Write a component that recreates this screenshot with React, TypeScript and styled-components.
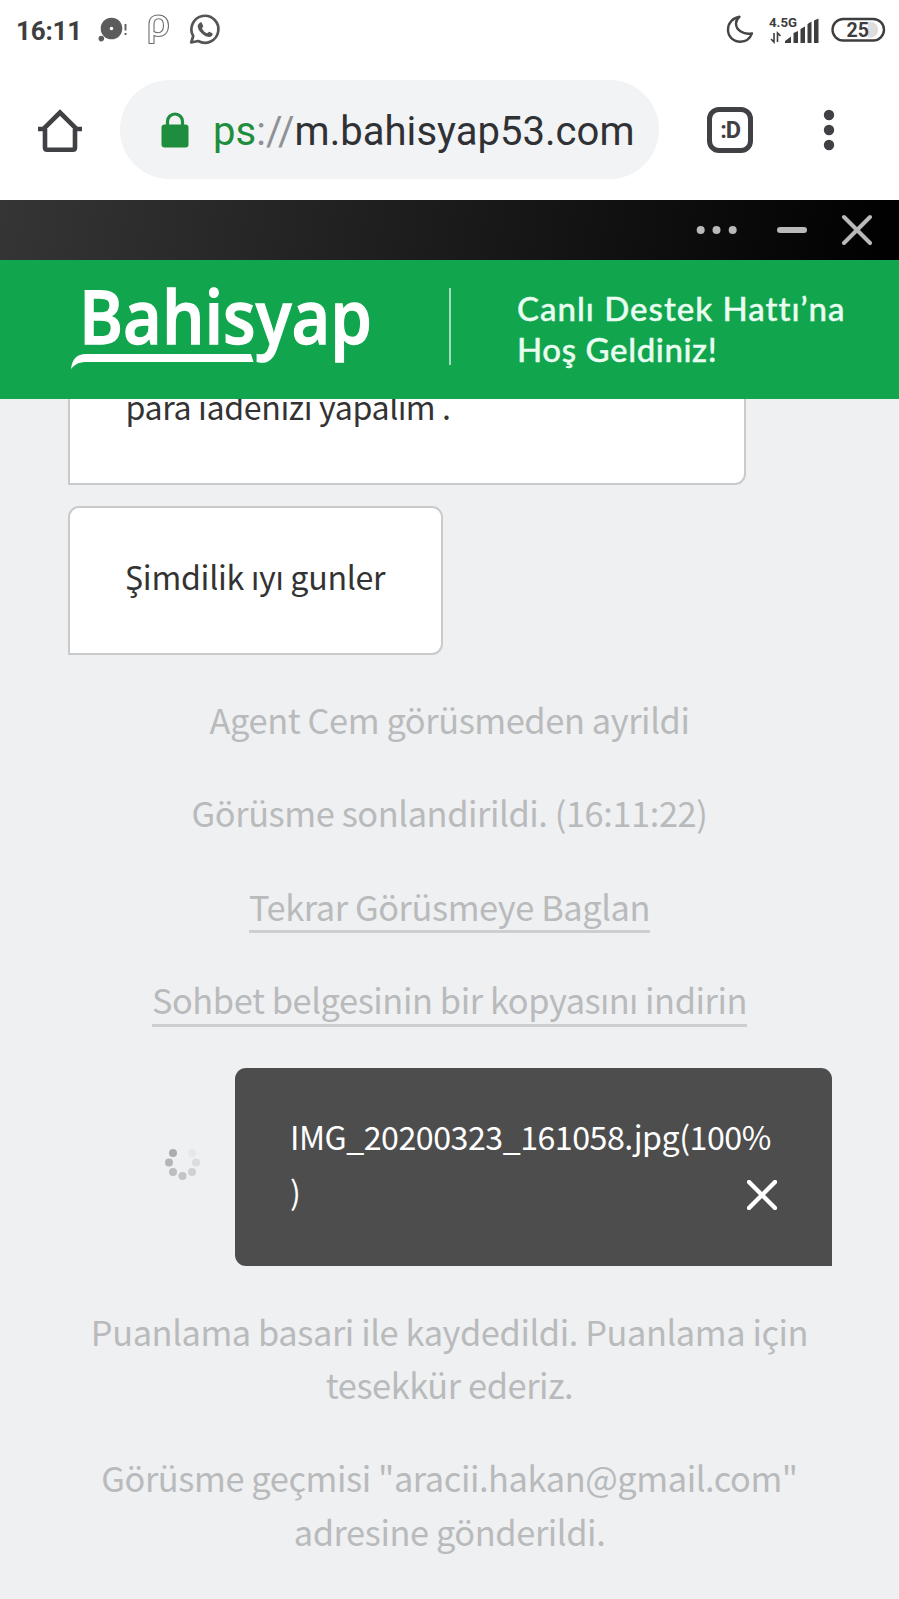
import React from "react";
import styled, { createGlobalStyle } from "styled-components";

const chatFont = `"Noto Sans CJK SC", "Noto Sans", sans-serif`;

const GlobalStyle = createGlobalStyle`
  body { margin: 0; background: #eff0f2; }
  * { box-sizing: border-box; }
  svg { display: block; flex: none; }
`;

const Screen = styled.div`
  width: 899px;
  height: 1599px;
  overflow: hidden;
  display: flex;
  flex-direction: column;
  background: #eff0f2;
`;

const StatusBar = styled.header`
  height: 60px;
  padding: 0 13px 0 16px;
  display: flex;
  align-items: center;
  justify-content: space-between;
  background: #fff;
  color: #3e3e40;
  font-family: Roboto, sans-serif;
`;

const StatusGroup = styled.div`
  display: flex;
  align-items: center;
`;

const StatusSpacer = styled.span<{ $width: number }>`
  width: ${(p) => p.$width}px;
`;

const Clock = styled.span`
  width: 82px;
  padding-top: 2px;
  font-size: 26px;
  font-weight: 700;
  line-height: 60px;
  letter-spacing: -0.2px;
`;

const BrowserBar = styled.div`
  height: 140px;
  padding: 20px 0 21px 36px;
  display: flex;
  align-items: center;
  background: #fff;
`;

const AddressField = styled.div`
  width: 539px;
  height: 99px;
  margin: 0 48px 0 36px;
  padding-left: 41px;
  border-radius: 50px;
  background: #f1f3f4;
  display: flex;
  align-items: center;
`;

const Url = styled.span`
  margin-left: 24px;
  font-family: Roboto, sans-serif;
  font-size: 40px;
  line-height: 50px;
  letter-spacing: 0.03px;
  color: #303134;
  white-space: nowrap;
  padding-top: 4px;
`;

const Scheme = styled.span`
  color: #1e8e3e;
`;

const Slashes = styled.span`
  color: #8e9195;
`;

const TabSwitcher = styled.div`
  width: 46px;
  height: 46px;
  margin-right: 70px;
  border: 5px solid #3f4144;
  border-radius: 12px;
  display: flex;
  align-items: center;
  justify-content: center;
  font: 700 23.5px/36px Roboto, sans-serif;
  letter-spacing: -1.2px;
  color: #3f4144;
`;

const WindowBar = styled.div`
  height: 60px;
  padding-right: 27px;
  display: flex;
  align-items: center;
  justify-content: flex-end;
  background: linear-gradient(100deg, #353535, #000);
`;

const Banner = styled.div`
  height: 139px;
  flex: none;
  display: flex;
  align-items: flex-start;
  background: #11a54e;
`;

const Divider = styled.div`
  width: 2px;
  height: 77px;
  margin: 28px 66px 0 0;
  background: #a4dbb9;
`;

const Greeting = styled.div`
  padding-top: 28px;
  font: 500 33px/40.5px Lato, sans-serif;
  color: #e9fdf0;
  white-space: nowrap;
  -webkit-text-stroke: 0.4px #e9fdf0;
`;

const GreetingLine = styled.div<{ $tracking: number }>`
  letter-spacing: ${(p) => p.$tracking}px;
`;

const Chat = styled.main`
  flex: 1;
  min-height: 0;
  overflow: hidden;
  display: flex;
  flex-direction: column;
  align-items: center;
  font-family: ${chatFont};
`;

const Bubble = styled.div<{ $width: number; $continued?: boolean }>`
  width: ${(p) => p.$width}px;
  height: 149px;
  flex: none;
  align-self: flex-start;
  margin: ${(p) => (p.$continued ? "-63px" : "21px")} 0 0 68px;
  padding: 41px 0 0 55.5px;
  border: 2.5px solid #c9cacb;
  border-radius: 11px 11px 11px 0;
  background: #fff;
  color: #333;
  font-size: 32.2px;
  line-height: 54px;
  letter-spacing: ${(p) => (p.$continued ? "-0.4px" : "-0.3px")};
  white-space: nowrap;
`;

const Notice = styled.p<{ $top?: number }>`
  margin: ${(p) => p.$top ?? 40}px 0 0;
  flex: none;
  font-size: 34.4px;
  line-height: 53.4px;
  letter-spacing: -0.42px;
  color: #b9babb;
  text-align: center;
  white-space: nowrap;
`;

const NoticeLink = styled.a`
  display: inline-block;
  height: 53.4px;
  border-bottom: 3px solid #cdcecf;
`;

const UploadRow = styled.div`
  align-self: stretch;
  flex: none;
  display: flex;
  align-items: center;
  justify-content: flex-end;
  margin-top: 41px;
  padding-right: 67px;
`;

const SpinnerSlot = styled.div`
  padding-bottom: 8px;
`;

const UploadBubble = styled.div`
  width: 597px;
  height: 198px;
  margin-left: 34px;
  padding: 41px 55px 0 55px;
  display: flex;
  align-items: flex-start;
  border-radius: 11px 11px 0 11px;
  background: #4d4d4d;
  color: #fff;
  font-size: 32.2px;
  line-height: 55px;
  letter-spacing: -0.5px;
`;

const FileName = styled.span`
  flex: 1;
  white-space: nowrap;
`;

const RemoveButton = styled.button`
  margin: 71px 0 0 -40px;
  padding: 0;
  border: 0;
  background: none;
`;

const spinnerDots = [
  { x: 8, y: 8, c: "#acacad" },
  { x: 4, y: 17.5, c: "#b5b5b6" },
  { x: 8, y: 27, c: "#bdbdbe" },
  { x: 17.5, y: 31, c: "#c4c4c5" },
  { x: 27, y: 27, c: "#cfd0d1" },
  { x: 31, y: 17.5, c: "#dbdcdd" },
  { x: 27, y: 8, c: "#e6e7e9" },
];

const Spinner = () => (
  <svg width="36" height="36" viewBox="0 0 36 36">
    {spinnerDots.map((d) => (
      <circle key={`${d.x}-${d.y}`} cx={d.x} cy={d.y} r="4" fill={d.c} />
    ))}
  </svg>
);

const Cross = ({ color, width }: { color: string; width: number }) => (
  <svg width="30" height="30" viewBox="0 0 30 30" stroke={color} strokeWidth={width} strokeLinecap="round">
    <path d="M2 2L28 28M28 2L2 28" />
  </svg>
);

const LeftStatusIcons = () => (
  <svg width="124" height="60" viewBox="98 0 124 60" fill="none">
    <circle cx="111.500" cy="28.500" r="6.300" stroke="#5c5c5c" strokeWidth="9" />
    <circle cx="101.300" cy="38.600" r="2.800" fill="#5c5c5c" />
    <path d="M125.500 24V30.500M125.500 33V35" stroke="#666" strokeWidth="2" />
    <path
      d="M149 24C149 18 153 15 158.500 15C164.500 15 168.500 19 168.500 25.500C168.500 32.500 164.500 36.500 158.500 36.500C156.500 36.500 155 36 154 35.500V43.500H149ZM154 24.500V31.500C155 32.300 156.500 32.700 158 32.700C161.500 32.700 163.500 30 163.500 25.500C163.500 21.300 161.700 18.800 158.700 18.800C155.600 18.800 154 21 154 24.500Z"
      stroke="#6e6e6e"
      strokeWidth="1.100"
    />
    <path
      d="M191.200 42.500L193.200 36A13.500 13.500 0 1 1 198.200 41Z"
      stroke="#555"
      strokeWidth="2.700"
      strokeLinejoin="round"
    />
    <path
      d="M199.500 23C200.500 22 201.600 22.200 202 23.200L203.200 26C203.500 26.800 201.800 28 202 28.600C203.200 31 204.800 32.400 207 33.300C207.700 33.500 208.800 31.500 209.500 31.800L212.200 33.200C213 33.700 212.700 35 211.800 35.900C210 37.600 207 37 204 35.200C201 33.300 198.800 30.500 198 28C197.300 25.800 198 24.200 199.500 23Z"
      fill="#555"
    />
  </svg>
);

const Moon = () => (
  <svg width="28" height="30" viewBox="726 15 28 30" fill="none">
    <path
      d="M739.500 16.800C732.500 18 728 23.200 728 29.700C728 36.700 733.500 41.700 740.300 41.700C745.500 41.700 750 38.700 752 33.400C743.500 35.300 736 30 736 23.500C736 21 737.300 18.600 739.500 16.800Z"
      stroke="#454547"
      strokeWidth="2.400"
      strokeLinejoin="round"
    />
  </svg>
);

const Signal = () => (
  <svg width="50" height="30" viewBox="769 14 50 30">
    <text x="769" y="25.500" fontFamily="Roboto, sans-serif" fontWeight="700" fontSize="13.500" textLength="28" lengthAdjust="spacingAndGlyphs" fill="#3e3e40">
      4.5G
    </text>
    <path d="M774 32V41L771 38M777.500 41V32L780.500 35" stroke="#3e3e40" strokeWidth="1.600" fill="none" />
    <path
      d="M785 42V40L791 35.500V42ZM793.500 42V32L798 30V42ZM800.500 42V28L805 25.500V42ZM807.500 42V23L811.500 20.500V42ZM814 42V19.500L818.500 17.500V42Z"
      fill="#3e3e40"
    />
  </svg>
);

const Battery = () => (
  <svg width="55" height="26" viewBox="0 0 55 26">
    <path d="M37 5H41A8 8 0 0 1 41 20.500H37Z" fill="#dedede" />
    <rect x="1.500" y="2" width="51.500" height="21.500" rx="10.750" fill="none" stroke="#3e3e40" strokeWidth="2.400" />
    <text x="15.500" y="20.200" fontFamily="Roboto, sans-serif" fontWeight="700" fontSize="20.500" textLength="22.500" lengthAdjust="spacingAndGlyphs" fill="#3e3e40">
      25
    </text>
  </svg>
);

const Home = () => (
  <svg width="48" height="48" viewBox="0 0 48 48" fill="none" stroke="#3f4144" strokeWidth="4.600">
    <path d="M9 23V41.500Q9 43.700 11.200 43.700H36.800Q39 43.700 39 41.500V23" />
    <path d="M2 23H7.500L24 6.500L40.500 23H46" />
  </svg>
);

const Lock = () => (
  <svg width="28" height="36" viewBox="0 0 28 36">
    <path d="M6.500 14V9.500A7.500 7.500 0 0 1 21.500 9.500V14" fill="none" stroke="#1e8e3e" strokeWidth="3.200" />
    <rect x="0.500" y="12.500" width="27" height="23" rx="3" fill="#1e8e3e" />
  </svg>
);

const Kebab = () => (
  <svg width="12" height="42" viewBox="0 0 12 42" fill="#3f4144">
    <circle cx="6" cy="6" r="5.200" />
    <circle cx="6" cy="21" r="5.200" />
    <circle cx="6" cy="36" r="5.200" />
  </svg>
);

const WindowControls = () => (
  <svg width="176" height="32" viewBox="696 214 176 32" fill="#b9b9b9">
    <circle cx="700.700" cy="230" r="4" />
    <circle cx="716.500" cy="230" r="4" />
    <circle cx="732.700" cy="230" r="4" />
    <rect x="777" y="227" width="30" height="6" rx="3" />
    <path d="M844 217L870 243M870 217L844 243" stroke="#b9b9b9" strokeWidth="4" strokeLinecap="round" />
  </svg>
);

const Logo = () => (
  <svg width="449" height="139" viewBox="0 260 449 139" fill="#fff">
    <text x="79" y="344" fontFamily='"Open Sans", sans-serif' fontWeight="600" fontSize="74.500" textLength="293" lengthAdjust="spacingAndGlyphs" stroke="#fff" strokeWidth="1.300">
      Bahisyap
    </text>
    <path d="M71 369C72 359 77 354 86 354H251L253.500 362H88C80 362 76 363 71 369Z" />
  </svg>
);

export default function App() {
  return (
    <Screen>
      <GlobalStyle />
      <StatusBar>
        <StatusGroup>
          <Clock>16:11</Clock>
          <LeftStatusIcons />
        </StatusGroup>
        <StatusGroup>
          <Moon />
          <StatusSpacer $width={15} />
          <Signal />
          <StatusSpacer $width={12} />
          <Battery />
        </StatusGroup>
      </StatusBar>
      <BrowserBar>
        <Home />
        <AddressField>
          <Lock />
          <Url>
            <Scheme>ps</Scheme>
            <Slashes>://</Slashes>m.bahisyap53.com
          </Url>
        </AddressField>
        <TabSwitcher>:D</TabSwitcher>
        <Kebab />
      </BrowserBar>
      <WindowBar>
        <WindowControls />
      </WindowBar>
      <Banner>
        <Logo />
        <Divider />
        <Greeting>
          <GreetingLine $tracking={1}>Canlı Destek Hattı’na</GreetingLine>
          <GreetingLine $tracking={0.6}>Hoş Geldiniz!</GreetingLine>
        </Greeting>
      </Banner>
      <Chat>
        <Bubble $width={678} $continued>
          para iadenizi yapalım .
        </Bubble>
        <Bubble $width={375}>Şimdilik ıyı gunler</Bubble>
        <Notice $top={38}>Agent Cem görüsmeden ayrildi</Notice>
        <Notice>Görüsme sonlandirildi. (16:11:22)</Notice>
        <Notice>
          <NoticeLink>Tekrar Görüsmeye Baglan</NoticeLink>
        </Notice>
        <Notice>
          <NoticeLink>Sohbet belgesinin bir kopyasını indirin</NoticeLink>
        </Notice>
        <UploadRow>
          <SpinnerSlot>
            <Spinner />
          </SpinnerSlot>
          <UploadBubble>
            <FileName>
              IMG_20200323_161058.jpg(100%
              <br />)
            </FileName>
            <RemoveButton aria-label="Kaldır">
              <Cross color="#fff" width={4.4} />
            </RemoveButton>
          </UploadBubble>
        </UploadRow>
        <Notice $top={39}>
          Puanlama basari ile kaydedildi. Puanlama için
          <br />
          tesekkür ederiz.
        </Notice>
        <Notice>
          Görüsme geçmisi "aracii.hakan@gmail.com"
          <br />
          adresine gönderildi.
        </Notice>
      </Chat>
    </Screen>
  );
}
